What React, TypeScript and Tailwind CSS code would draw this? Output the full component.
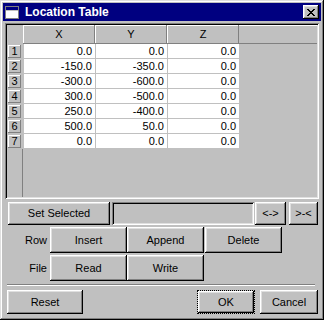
import React from 'react';

// win98-style bevels
const raised =
  'shadow-[inset_-1px_-1px_#000,inset_1px_1px_#fff,inset_-2px_-2px_#808080,inset_2px_2px_#dfdfdf]';
const raisedThin = 'shadow-[inset_-1px_-1px_#808080,inset_1px_1px_#fff]';
const sunken =
  'shadow-[inset_1px_1px_#808080,inset_-1px_-1px_#fff,inset_2px_2px_#000,inset_-2px_-2px_#dfdfdf]';

const rows = [
  ['0.0', '0.0', '0.0'],
  ['-150.0', '-350.0', '0.0'],
  ['-300.0', '-600.0', '0.0'],
  ['300.0', '-500.0', '0.0'],
  ['250.0', '-400.0', '0.0'],
  ['500.0', '50.0', '0.0'],
  ['0.0', '0.0', '0.0'],
];

function Btn({ label, className = '' }: { label: string; className?: string }) {
  return (
    <button
      className={`flex items-center justify-center bg-[#c0c0c0] text-[11px] text-black leading-none ${raised} ${className}`}
    >
      {label}
    </button>
  );
}

function TitleIcon() {
  return (
    <svg width="14" height="13" viewBox="0 0 14 13">
      <rect x="0.5" y="0.5" width="13" height="12" fill="#fff" stroke="#808080" />
      <rect x="1" y="1" width="12" height="3" fill="#000080" />
      <rect x="1" y="4" width="12" height="1" fill="#c0c0c0" />
    </svg>
  );
}

function CloseGlyph() {
  return (
    <svg width="8" height="7" viewBox="0 0 8 7" shapeRendering="crispEdges">
      <path d="M0 0h2v1H0zM6 0h2v1H6zM1 1h2v1H1zM5 1h2v1H5zM2 2h4v1H2zM3 3h2v1H3zM2 4h4v1H2zM1 5h2v1H1zM5 5h2v1H5zM0 6h2v1H0zM6 6h2v1H6z" fill="#000" />
    </svg>
  );
}

export default function App() {
  return (
    <div
      className={`w-[324px] h-[320px] bg-[#c0c0c0] p-[3px] flex flex-col shadow-[inset_-1px_-1px_#000,inset_1px_1px_#dfdfdf,inset_-2px_-2px_#808080,inset_2px_2px_#fff]`}
      style={{ fontFamily: '"Liberation Sans", Arial, sans-serif' }}
    >
      {/* title bar */}
      <div className="h-[18px] bg-[#000080] flex items-center pl-[2px] pr-[2px]">
        <TitleIcon />
        <span className="ml-[6px] text-white font-bold text-[12px] leading-none">Location Table</span>
        <div className={`ml-auto w-[16px] h-[14px] bg-[#c0c0c0] flex items-center justify-center ${raised}`}>
          <CloseGlyph />
        </div>
      </div>

      {/* grid */}
      <div className={`mt-[2px] ml-[2px] w-[314px] h-[176px] p-[2px] bg-[#c0c0c0] flex flex-col ${sunken}`}>
        <div className="h-[19px] flex shrink-0">
          <div className="w-[16px] bg-[#c0c0c0]" />
          {['X', 'Y', 'Z'].map((h) => (
            <div
              key={h}
              className={`w-[72px] flex items-center justify-center text-[11px] text-black ${raisedThin}`}
            >
              {h}
            </div>
          ))}
          <div className="flex-1 border-t border-b border-t-white border-b-[#808080]" />
        </div>
        {rows.map((r, i) => (
          <div key={i} className="h-[15px] flex shrink-0">
            <div className="w-[16px] p-[1px] pr-[2px] flex">
              <div className={`flex-1 flex items-center justify-center text-[11px] text-black leading-none ${raisedThin}`}>
                {i + 1}
              </div>
            </div>
            {r.map((v, j) => (
              <div
                key={j}
                className="w-[72px] bg-white border-l border-b border-[#c0c0c0] flex items-center justify-end pr-[3px] text-[11px] text-black leading-none"
              >
                {v}
              </div>
            ))}
          </div>
        ))}
        <div className="flex-1 flex">
          <div className="w-[16px] border-r border-[#808080]" />
        </div>
      </div>

      {/* set selected row */}
      <div className="mt-[3px] h-[23px] flex shrink-0">
        <Btn label="Set Selected" className="ml-[5px] w-[102px]" />
        <div className={`ml-[2px] w-[142px] bg-[#c0c0c0] ${sunken}`} />
        <Btn label="<->" className="ml-[1px] w-[31px]" />
        <Btn label=">-<" className="ml-[3px] w-[29px]" />
      </div>

      {/* row ops */}
      <div className="mt-[2px] h-[26px] flex items-stretch shrink-0">
        <div className="w-[47px] flex items-center justify-end pr-[3px] text-[11px] text-black">Row</div>
        <Btn label="Insert" className="w-[77px]" />
        <Btn label="Append" className="w-[77px]" />
        <Btn label="Delete" className="ml-[1px] w-[77px]" />
      </div>

      {/* file ops */}
      <div className="mt-[2px] h-[26px] flex items-stretch shrink-0">
        <div className="w-[47px] flex items-center justify-end pr-[3px] text-[11px] text-black">File</div>
        <Btn label="Read" className="w-[77px]" />
        <Btn label="Write" className="w-[77px]" />
      </div>

      {/* separator */}
      <div className="mt-[3px] ml-[4px] w-[308px] h-[2px] border-t border-b border-t-[#808080] border-b-white shrink-0" />

      {/* bottom buttons */}
      <div className="mt-[4px] h-[24px] flex shrink-0">
        <Btn label="Reset" className="ml-[4px] w-[76px]" />
        <div className="flex-1" />
        <button
          className={`w-[58px] bg-[#c0c0c0] text-[11px] text-black leading-none flex items-center justify-center border border-dotted border-black ${raised}`}
        >
          OK
        </button>
        <Btn label="Cancel" className="ml-[5px] mr-[3px] w-[58px]" />
      </div>
    </div>
  );
}
